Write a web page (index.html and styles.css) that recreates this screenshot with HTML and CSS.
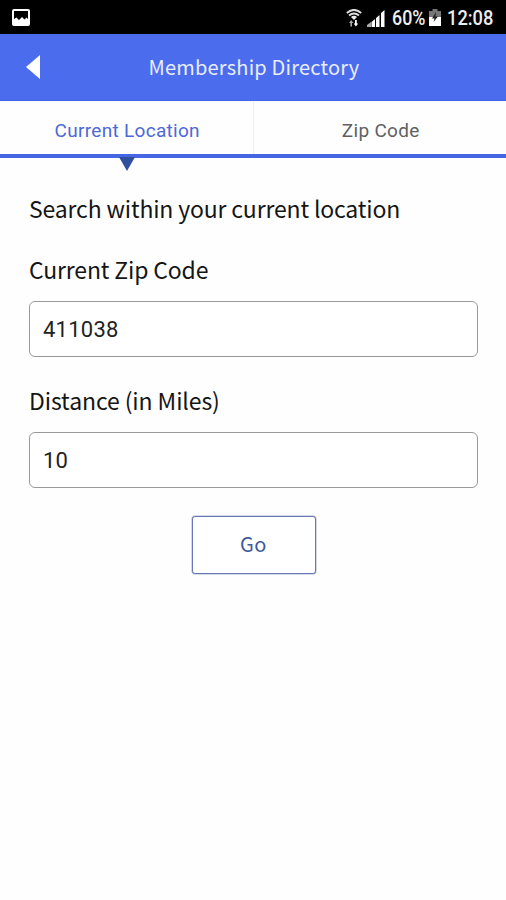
FILE: index.html
```html
<!DOCTYPE html>
<html lang="en">
<head>
<meta charset="utf-8">
<title>Membership Directory</title>
<link rel="stylesheet" href="styles.css">
</head>
<body>
<div class="statusbar">
  <svg class="photo" width="18" height="17" viewBox="0 0 18 17"><path fill="#fff" fill-rule="evenodd" d="M2 0H16a2 2 0 0 1 2 2V15a2 2 0 0 1-2 2H2a2 2 0 0 1-2-2V2a2 2 0 0 1 2-2ZM2 2V10L4.500 8.500L7 11L10 8L12.500 10.500L14.500 8.500L16 10V2Z"/></svg>
  <div class="status">
    <svg class="wifi" width="16" height="18" viewBox="0 0 16 18"><g fill="none" stroke="#ddd" stroke-width="1.900"><path d="M.8 4Q8-2.200 15.200 4"/><path d="M3 6.500Q8 2.500 13 6.500"/></g><path fill="#eee" d="M5 8Q8 5.700 11 8L8 11Z"/><path fill="#aaa" d="M3 14L5.200 11L7.400 14H6V17.500H4.400V14Z"/><path fill="#fff" d="M9 11H10.800V14.500H12.200L9.900 17.500L7.700 14.500H9Z"/></svg>
    <svg class="signal" width="18" height="17" viewBox="0 0 18 17"><path fill="#aaa" d="M0 17V15L4 12V17Z"/><path fill="#fff" d="M4.500 17V12L8 9V17ZM9 17V8L12.500 5V17ZM14 17V3L17.500 0V17Z"/></svg>
    <span class="percent"><span class="narrow">60%</span></span>
    <svg class="battery" width="12" height="17" viewBox="0 0 12 17"><path fill="#777" d="M3.500 0H8.500V2H12V9H0V2H3.500Z"/><path fill="#fff" d="M0 8H12V17H0Z"/><path fill="#222" d="M7 3L3 9.500H5.500L4.500 13L9 7.500H6.500Z"/></svg>
    <span class="clock"><span class="narrow">12:08</span></span>
  </div>
</div>
<header class="header">
  <svg class="back" width="14" height="24" viewBox="0 0 14 24"><path fill="#fff" d="M14 0V24L0 12Z"/></svg>
  <h1 class="title">Membership Directory</h1>
</header>
<nav class="tabs">
  <div class="tab active"><span>Current Location</span></div>
  <div class="tab"><span>Zip Code</span></div>
</nav>
<main class="content">
  <p class="label intro">Search within your current location</p>
  <label class="label zip" for="zip">Current Zip Code</label>
  <input class="field" id="zip" value="411038">
  <label class="label distance" for="miles">Distance (in Miles)</label>
  <input class="field" id="miles" value="10">
  <button class="go">Go</button>
</main>
</body>
</html>
```
FILE: styles.css
```css
* { box-sizing: border-box; }
body {
  margin: 0;
  height: 900px;
  background: #fefefe;
  color: #151515;
  font-family: "Noto Sans CJK JP", "Noto Sans", sans-serif;
}
svg { display: block; flex: none; }
.statusbar {
  height: 34px;
  background: #000;
  display: flex;
  justify-content: space-between;
  align-items: flex-start;
  padding: 9px 13px 0 12px;
}
.status {
  display: flex;
  align-items: flex-start;
  color: #eee;
  font: 500 21px/18px Roboto, sans-serif;
}
.signal { margin: 1px 7px 0 5px; }
.percent { width: 33px; }
.clock { width: 46px; }
.narrow {
  display: inline-block;
  transform: scaleX(0.87);
  transform-origin: left;
}
.percent .narrow { transform: scaleX(0.85); }
.battery { margin: 0 6px 0 4px; }
.header {
  height: 67px;
  background: #4b6cec;
  border-bottom: 1px solid #4265e5;
  display: grid;
  grid-template-columns: 40px 1fr 40px;
  align-items: center;
}
.back { margin-left: 26px; }
.title {
  margin: 0;
  padding-left: 2px;
  color: #e9edff;
  font-size: 20px;
  font-weight: 400;
  line-height: 30px;
  letter-spacing: 0.2px;
  text-align: center;
}
.tabs {
  height: 57px;
  display: flex;
  border-bottom: 4px solid #4666e4;
}
.tab {
  flex: 1;
  position: relative;
  display: flex;
  align-items: center;
  justify-content: center;
  padding: 7px 0 0 2px;
  color: #606060;
  font: 400 19px/24px Roboto, sans-serif;
  letter-spacing: 0.3px;
}
.tab.active {
  color: #4d68d8;
  border-right: 1px solid #eee;
}
.tab.active::after {
  content: "";
  position: absolute;
  top: 56px;
  left: 119px;
  border: solid transparent;
  border-width: 14px 8px 0;
  border-top-color: #304f9c;
}
.content {
  display: flex;
  flex-direction: column;
  padding: 33px 28px 0 29px;
}
.label {
  margin: 0;
  font-size: 23px;
  line-height: 34px;
  letter-spacing: -0.16px;
}
.zip { margin-top: 27px; }
.distance { margin-top: 26px; letter-spacing: -0.1px; }
.field {
  width: 449px;
  height: 56px;
  margin-top: 15px;
  padding: 0 13px;
  border: 1px solid #999;
  border-radius: 6px;
  background: #fff;
  color: #222;
  font: 400 22px Roboto, sans-serif;
  letter-spacing: 0.25px;
}
.go {
  align-self: center;
  width: 124px;
  height: 58px;
  margin-top: 28px;
  padding: 0 0 3px;
  border: 1px solid #6878b4;
  border-radius: 3px;
  box-shadow: 0 0 0 0.5px #a8b1d4;
  background: #fff;
  color: #40599b;
  font: 400 20px "Noto Sans CJK JP", sans-serif;
  letter-spacing: 0.5px;
}
```
